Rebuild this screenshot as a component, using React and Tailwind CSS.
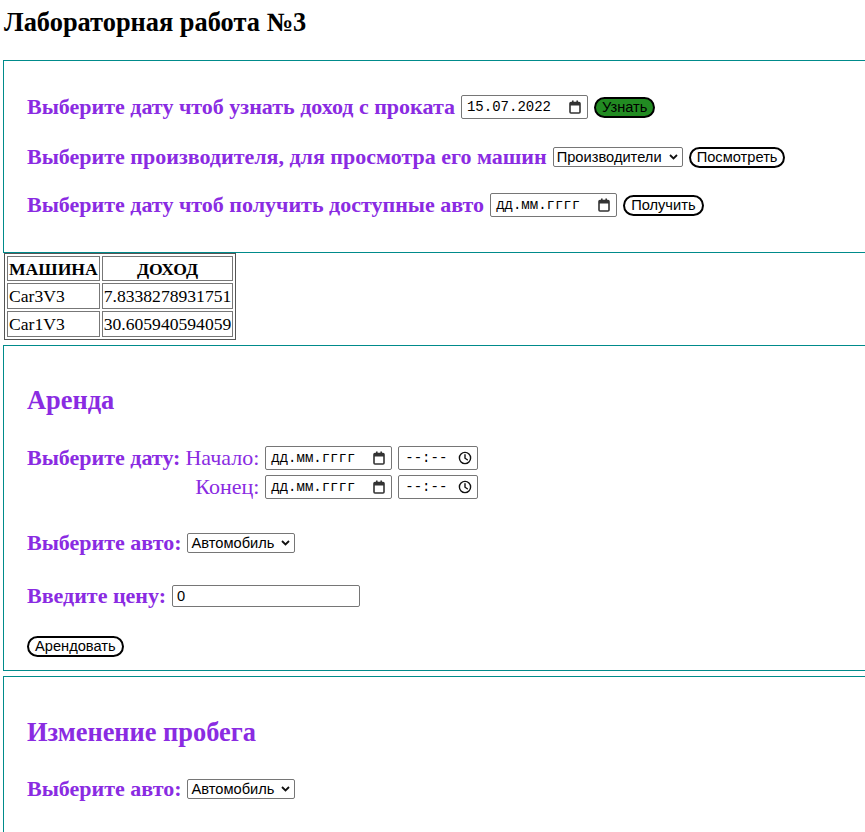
import React from 'react';

const serif = { fontFamily: '"Liberation Serif", "Times New Roman", serif' };
const sans = { fontFamily: '"Liberation Sans", Arial, sans-serif' };
const mono = { fontFamily: '"Liberation Mono", "DejaVu Sans Mono", monospace' };

const CalendarIcon = () => (
    <svg width="12" height="14" viewBox="0 0 12 14" className="shrink-0">
        <rect x="1" y="2.5" width="10" height="10.5" rx="1" fill="none" stroke="#333" strokeWidth="1.6" />
        <rect x="1" y="2.5" width="10" height="3" fill="#333" />
        <rect x="3" y="0.5" width="1.6" height="3" fill="#333" />
        <rect x="7.4" y="0.5" width="1.6" height="3" fill="#333" />
    </svg>
);

const ClockIcon = () => (
    <svg width="14" height="14" viewBox="0 0 14 14" className="shrink-0">
        <circle cx="7" cy="7" r="5.6" fill="none" stroke="#111" strokeWidth="1.4" />
        <path d="M7 3.8V7.2L9.3 8.8" fill="none" stroke="#111" strokeWidth="1.4" strokeLinecap="round" />
    </svg>
);

const Chevron = () => (
    <svg width="9" height="6" viewBox="0 0 9 6" className="shrink-0">
        <path d="M1 1L4.5 4.5L8 1" fill="none" stroke="#111" strokeWidth="1.8" />
    </svg>
);

// фейковые нативные поля, чтобы формат был как в русской локали
const DateInput = ({ value }) => (
    <span className="inline-flex items-center justify-between w-[127px] h-[24px] border border-[#767676] rounded-[2px] pl-[5px] pr-[6px] bg-white align-middle font-normal">
        <span className="text-[14px] leading-none text-black" style={mono}>
            {value || 'дд.мм.гггг'}
        </span>
        <CalendarIcon />
    </span>
);

const TimeInput = () => (
    <span className="inline-flex items-center justify-between w-[80px] h-[24px] border border-[#767676] rounded-[2px] pl-[6px] pr-[5px] bg-white align-middle font-normal">
        <span className="text-[14px] leading-none text-black" style={mono}>
            --:--
        </span>
        <ClockIcon />
    </span>
);

const Select = ({ label, w }) => (
    <span className={`inline-flex items-center justify-between ${w} h-[20px] border border-[#767676] rounded-[2px] pl-[3px] pr-[4px] bg-white align-middle font-normal`}>
        <span className="text-[14.67px] leading-none text-black" style={sans}>{label}</span>
        <Chevron />
    </span>
);

const Btn = ({ children, green }) => (
    <button
        className={`h-[21px] px-[6px] border-2 border-black rounded-full text-[14.67px] font-normal leading-none text-black align-middle ${green ? 'bg-[#228B22]' : 'bg-white'}`}
        style={sans}
    >
        {children}
    </button>
);

const App = () => {
    const box = 'w-[880px] border border-[#008B8B] pl-[23px]';
    const label = 'flex items-center gap-[6px] text-[#8A2BE2] text-[22px] font-bold leading-[24px]';

    return (
        <div className="min-h-screen bg-white overflow-hidden text-black" style={serif}>
            <h2 className="text-[26.4px] font-bold leading-[30px] pt-[7px] pl-[4px]">Лабораторная работа №3</h2>

            <div className="pl-[3px] mt-[23px]">
                {/* Доход */}
                <div className={`${box} h-[193px] pt-[34px]`}>
                    <div className={label}>
                        <span>Выберите дату чтоб узнать доход с проката</span>
                        <DateInput value="15.07.2022" />
                        <Btn green>Узнать</Btn>
                    </div>
                    <div className={`${label} mt-[26px]`}>
                        <span>Выберите производителя, для просмотра его машин</span>
                        <Select label="Производители" w="w-[130px]" />
                        <Btn>Посмотреть</Btn>
                    </div>
                    <div className={`${label} mt-[24px]`}>
                        <span>Выберите дату чтоб получить доступные авто</span>
                        <DateInput />
                        <Btn>Получить</Btn>
                    </div>
                </div>

                {/* Таблица */}
                <table className="ml-[1px] border border-[#555] border-separate border-spacing-[2px] text-[17.6px] leading-[20px]">
                    <thead>
                        <tr>
                            <th className="border border-[#777] px-[1px] h-[25px] text-left">МАШИНА</th>
                            <th className="border border-[#777] px-[1px] h-[25px] text-center">ДОХОД</th>
                        </tr>
                    </thead>
                    <tbody>
                        <tr>
                            <td className="border border-[#777] px-[1px] h-[26px]">Car3V3</td>
                            <td className="border border-[#777] px-[1px] h-[26px]">7.8338278931751</td>
                        </tr>
                        <tr>
                            <td className="border border-[#777] px-[1px] h-[26px]">Car1V3</td>
                            <td className="border border-[#777] px-[1px] h-[26px]">30.605940594059</td>
                        </tr>
                    </tbody>
                </table>

                {/* Аренда */}
                <div className={`${box} mt-[5px] h-[326px] pt-[40px]`}>
                    <div className="text-[#8A2BE2] text-[26.4px] font-bold leading-[28px]">Аренда</div>
                    <div className="flex items-start gap-[5px] mt-[32px] text-[#8A2BE2] text-[22px] leading-[24px]">
                        <span className="font-bold">Выберите дату:</span>
                        <div className="grid grid-cols-[auto_auto_auto] gap-x-[6px] gap-y-[5px] items-center">
                            <span className="text-right">Начало:</span>
                            <DateInput />
                            <TimeInput />
                            <span className="text-right">Конец:</span>
                            <DateInput />
                            <TimeInput />
                        </div>
                    </div>
                    <div className={`${label} mt-[32px]`}>
                        <span>Выберите авто:</span>
                        <Select label="Автомобиль" w="w-[108px]" />
                    </div>
                    <div className={`${label} mt-[29px]`}>
                        <span>Введите цену:</span>
                        <span className="inline-flex items-center w-[188px] h-[22px] border border-[#767676] rounded-[2px] px-[4px] text-[14.67px] font-normal text-black" style={sans}>0</span>
                    </div>
                    <div className="mt-[25px]">
                        <Btn>Арендовать</Btn>
                    </div>
                </div>

                {/* Пробег */}
                <div className={`${box} mt-[5px] h-[200px] pt-[41px]`}>
                    <div className="text-[#8A2BE2] text-[26.4px] font-bold leading-[28px]">Изменение пробега</div>
                    <div className={`${label} mt-[31px]`}>
                        <span>Выберите авто:</span>
                        <Select label="Автомобиль" w="w-[108px]" />
                    </div>
                </div>
            </div>
        </div>
    );
};

export default App;
